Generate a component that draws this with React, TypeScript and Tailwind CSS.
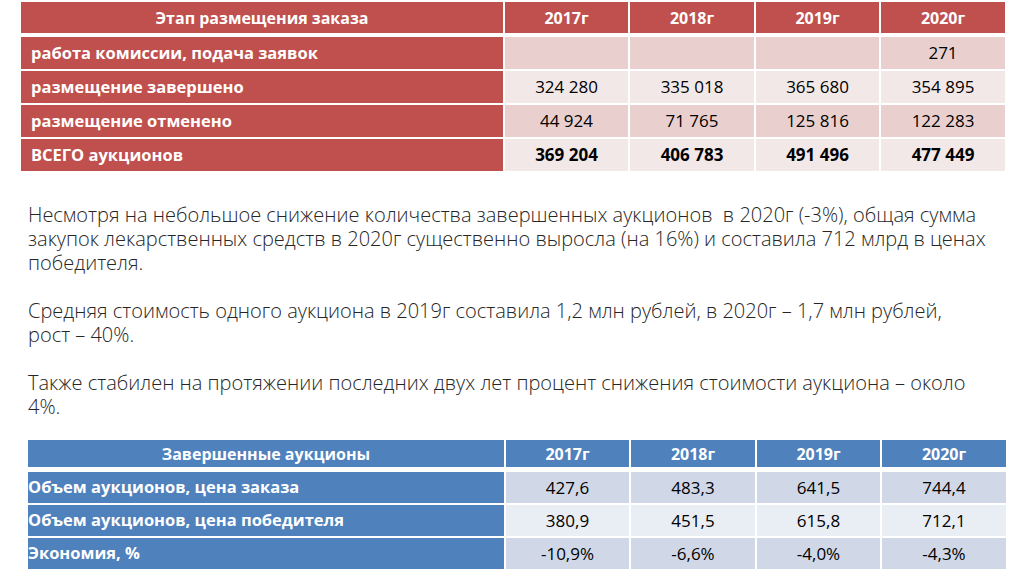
const redRows = [
  { label: "работа комиссии, подача заявок", vals: ["", "", "", "271"], bold: false },
  { label: "размещение завершено", vals: ["324 280", "335 018", "365 680", "354 895"], bold: false },
  { label: "размещение отменено", vals: ["44 924", "71 765", "125 816", "122 283"], bold: false },
  { label: "ВСЕГО аукционов", vals: ["369 204", "406 783", "491 496", "477 449"], bold: true },
];

const blueRows = [
  { label: "Объем аукционов, цена заказа", vals: ["427,6", "483,3", "641,5", "744,4"] },
  { label: "Объем аукционов, цена победителя", vals: ["380,9", "451,5", "615,8", "712,1"] },
  { label: "Экономия, %", vals: ["-10,9%", "-6,6%", "-4,0%", "-4,3%"] },
];

const years = ["2017г", "2018г", "2019г", "2020г"];

const tableFont = { fontFamily: '"Open Sans", "Noto Sans", sans-serif' };

export default function App() {
  return (
    <div className="w-[1021px] h-[574px] bg-white overflow-hidden" style={tableFont}>
      {/* этапы размещения */}
      <div className="ml-[21px] mt-[2px] w-[984px]">
        <div className="grid grid-cols-[482px_123px_124px_123px_124px] gap-x-[2px] h-[31px] text-white font-bold text-[16px]">
          <div className="bg-[#c0504d] flex items-center justify-center">Этап размещения заказа</div>
          {years.map((y) => (
            <div key={y} className="bg-[#c0504d] flex items-center justify-center">{y}</div>
          ))}
        </div>
        <div className="mt-[4px] flex flex-col gap-y-[2px]">
          {redRows.map((r, i) => (
            <div key={r.label} className="grid grid-cols-[482px_123px_124px_123px_124px] gap-x-[2px] h-[32px]">
              <div className="bg-[#c0504d] text-white font-bold text-[16.5px] flex items-center pl-[10px]">{r.label}</div>
              {r.vals.map((v, j) => (
                <div
                  key={j}
                  className={`${i % 2 === 0 ? "bg-[#e9d0cf]" : "bg-[#f3e8e8]"} flex items-center justify-center text-[17px] text-black ${r.bold ? "font-bold" : ""}`}
                >
                  {v}
                </div>
              ))}
            </div>
          ))}
        </div>
      </div>

      {/* текст */}
      <div className="ml-[28px] mt-[32px] text-[20px] leading-[24px] text-[#262626] font-light whitespace-nowrap">
        <p>
          Несмотря на небольшое снижение количества завершенных аукционов&nbsp; в 2020г (-3%), общая сумма
          <br />
          закупок лекарственных средств в 2020г существенно выросла (на 16%) и составила 712 млрд в ценах
          <br />
          победителя.
        </p>
        <p className="mt-[24px]">
          Средняя стоимость одного аукциона в 2019г составила 1,2 млн рублей, в 2020г – 1,7 млн рублей,
          <br />
          рост – 40%.
        </p>
        <p className="mt-[24px]">
          Также стабилен на протяжении последних двух лет процент снижения стоимости аукциона – около
          <br />
          4%.
        </p>
      </div>

      {/* завершенные аукционы */}
      <div className="ml-[28px] mt-[21px] w-[977px]">
        <div className="grid grid-cols-[476px_123px_124px_123px_124px] gap-x-[2px] h-[27px] text-white font-bold text-[16px]">
          <div className="bg-[#4f81bd] flex items-center justify-center">Завершенные аукционы</div>
          {years.map((y) => (
            <div key={y} className="bg-[#4f81bd] flex items-center justify-center">{y}</div>
          ))}
        </div>
        <div className="mt-[5px] flex flex-col gap-y-[2px]">
          {blueRows.map((r, i) => (
            <div key={r.label} className="grid grid-cols-[476px_123px_124px_123px_124px] gap-x-[2px] h-[31px]">
              <div className="bg-[#4f81bd] text-white font-bold text-[16.5px] flex items-center">{r.label}</div>
              {r.vals.map((v, j) => (
                <div
                  key={j}
                  className={`${i % 2 === 0 ? "bg-[#d0d8e8]" : "bg-[#e9edf4]"} flex items-center justify-center text-[17px] text-black`}
                >
                  {v}
                </div>
              ))}
            </div>
          ))}
        </div>
      </div>
    </div>
  );
}
